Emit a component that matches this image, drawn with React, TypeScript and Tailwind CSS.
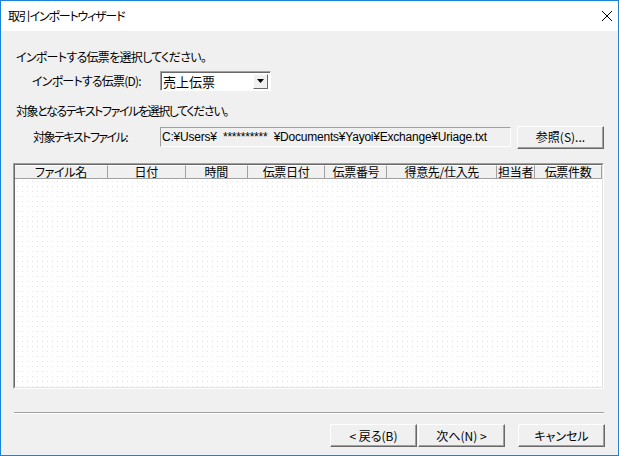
import React from "react";

const jp = "font-['Noto_Sans_CJK_JP','Noto_Sans',sans-serif] [font-feature-settings:'palt']";

const cols: [string, number][] = [
  ["ファイル名", 93],
  ["日付", 78],
  ["時間", 62],
  ["伝票日付", 78],
  ["伝票番号", 62],
  ["得意先/仕入先", 110],
  ["担当者", 38],
  ["伝票件数", 67],
];

function Btn({ children, w = 87 }: { children: React.ReactNode; w?: number }) {
  return (
    <div
      className="h-[23px] flex items-center justify-center bg-[#f0f0f0] border border-t-white border-l-white border-r-[#696969] border-b-[#696969] shadow-[inset_-1px_-1px_0_#a0a0a0] text-[12px] leading-none text-black whitespace-pre"
      style={{ width: w }}
    >
      {children}
    </div>
  );
}

export default function App() {
  return (
    <div className={`w-[619px] h-[456px] border border-[#1883d7] flex flex-col bg-white overflow-hidden ${jp}`}>
      {/* title bar */}
      <div className="h-[30px] bg-white flex items-center justify-between pl-[7px] pr-[4px] shrink-0">
        <span className="text-[12px] text-black tracking-[-1.2px]">取引インポートウィザード</span>
        <svg width="12" height="12" viewBox="0 0 12 12" className="mr-[1px]">
          <path d="M1 1 L11 11 M11 1 L1 11" stroke="#000" strokeWidth="1" />
        </svg>
      </div>
      {/* body */}
      <div className="flex-1 bg-[#f0f0f0] flex flex-col pl-[12px] pr-[12px] pt-[18px] text-black text-[12px]">
        <div className="pl-[3px] h-[16px] leading-[16px] tracking-[-0.7px]">インポートする伝票を選択してください。</div>
        <div className="flex items-center mt-[6px] h-[20px]">
          <div className="w-[147px] pl-[19px] leading-[16px] tracking-[-0.8px]">インポートする伝票(D):</div>
          <div className="w-[111px] h-[20px] bg-white border border-t-[#a0a0a0] border-l-[#a0a0a0] border-r-white border-b-white shadow-[inset_1px_1px_0_#696969] flex items-center justify-between pl-[2px] pr-[2px]">
            <span className="text-[13px] leading-none">売上伝票</span>
            <div className="w-[15px] h-[15px] bg-[#f0f0f0] border border-t-white border-l-white border-r-[#696969] border-b-[#696969] flex items-center justify-center">
              <svg width="7" height="4" viewBox="0 0 7 4">
                <path d="M0 0 H7 L3.5 4 Z" fill="#000" />
              </svg>
            </div>
          </div>
        </div>
        <div className="pl-[3px] mt-[12px] h-[16px] leading-[16px] tracking-[-1.4px]">対象となるテキストファイルを選択してください。</div>
        <div className="flex items-center mt-[8px] h-[20px]">
          <div className="w-[147px] pl-[20px] leading-[16px] tracking-[-1.5px]">対象テキストファイル:</div>
          <div className="w-[351px] h-[20px] border border-t-[#a0a0a0] border-l-[#a0a0a0] border-r-white border-b-white flex items-center pl-[1px] font-['Liberation_Sans',sans-serif] text-[12px] tracking-[-0.22px] whitespace-pre text-black">
            C:¥Users¥  **********  ¥Documents¥Yayoi¥Exchange¥Uriage.txt
          </div>
          <div className="ml-[6px]">
            <Btn>参照(S)...</Btn>
          </div>
        </div>
        {/* list view */}
        <div className="mt-[16px] w-[591px] h-[226px] border border-t-[#a0a0a0] border-l-[#a0a0a0] border-r-white border-b-white flex flex-col">
          <div className="flex-1 flex flex-col border border-t-[#696969] border-l-[#696969] border-r-[#e3e3e3] border-b-[#e3e3e3] bg-white">
            <div className="flex h-[14px] shrink-0 bg-[#f0f0f0]">
              {cols.map(([t, w]) => (
                <div
                  key={t}
                  className="h-[14px] border-r border-b border-r-[#a0a0a0] border-b-[#a0a0a0] border-t border-t-white flex items-center justify-center text-[12px] leading-none tracking-[-0.3px]"
                  style={{ width: w }}
                >
                  {t}
                </div>
              ))}
            </div>
            <div className="flex-1 bg-white bg-[radial-gradient(circle,#e4e4e4_0.6px,transparent_0.8px)] bg-[length:5px_5px]" />
          </div>
        </div>
        {/* separator */}
        <div className="mt-[23px] ml-[1px] w-[590px] h-[2px] border-t border-t-[#a0a0a0] border-b border-b-white" />
        {/* buttons */}
        <div className="flex mt-[10px] pl-[317px]">
          <Btn>{"< 戻る(B)"}</Btn>
          <div className="ml-[1px]">
            <Btn>{"次へ(N) >"}</Btn>
          </div>
          <div className="ml-[13px]">
            <Btn>キャンセル</Btn>
          </div>
        </div>
      </div>
    </div>
  );
}
